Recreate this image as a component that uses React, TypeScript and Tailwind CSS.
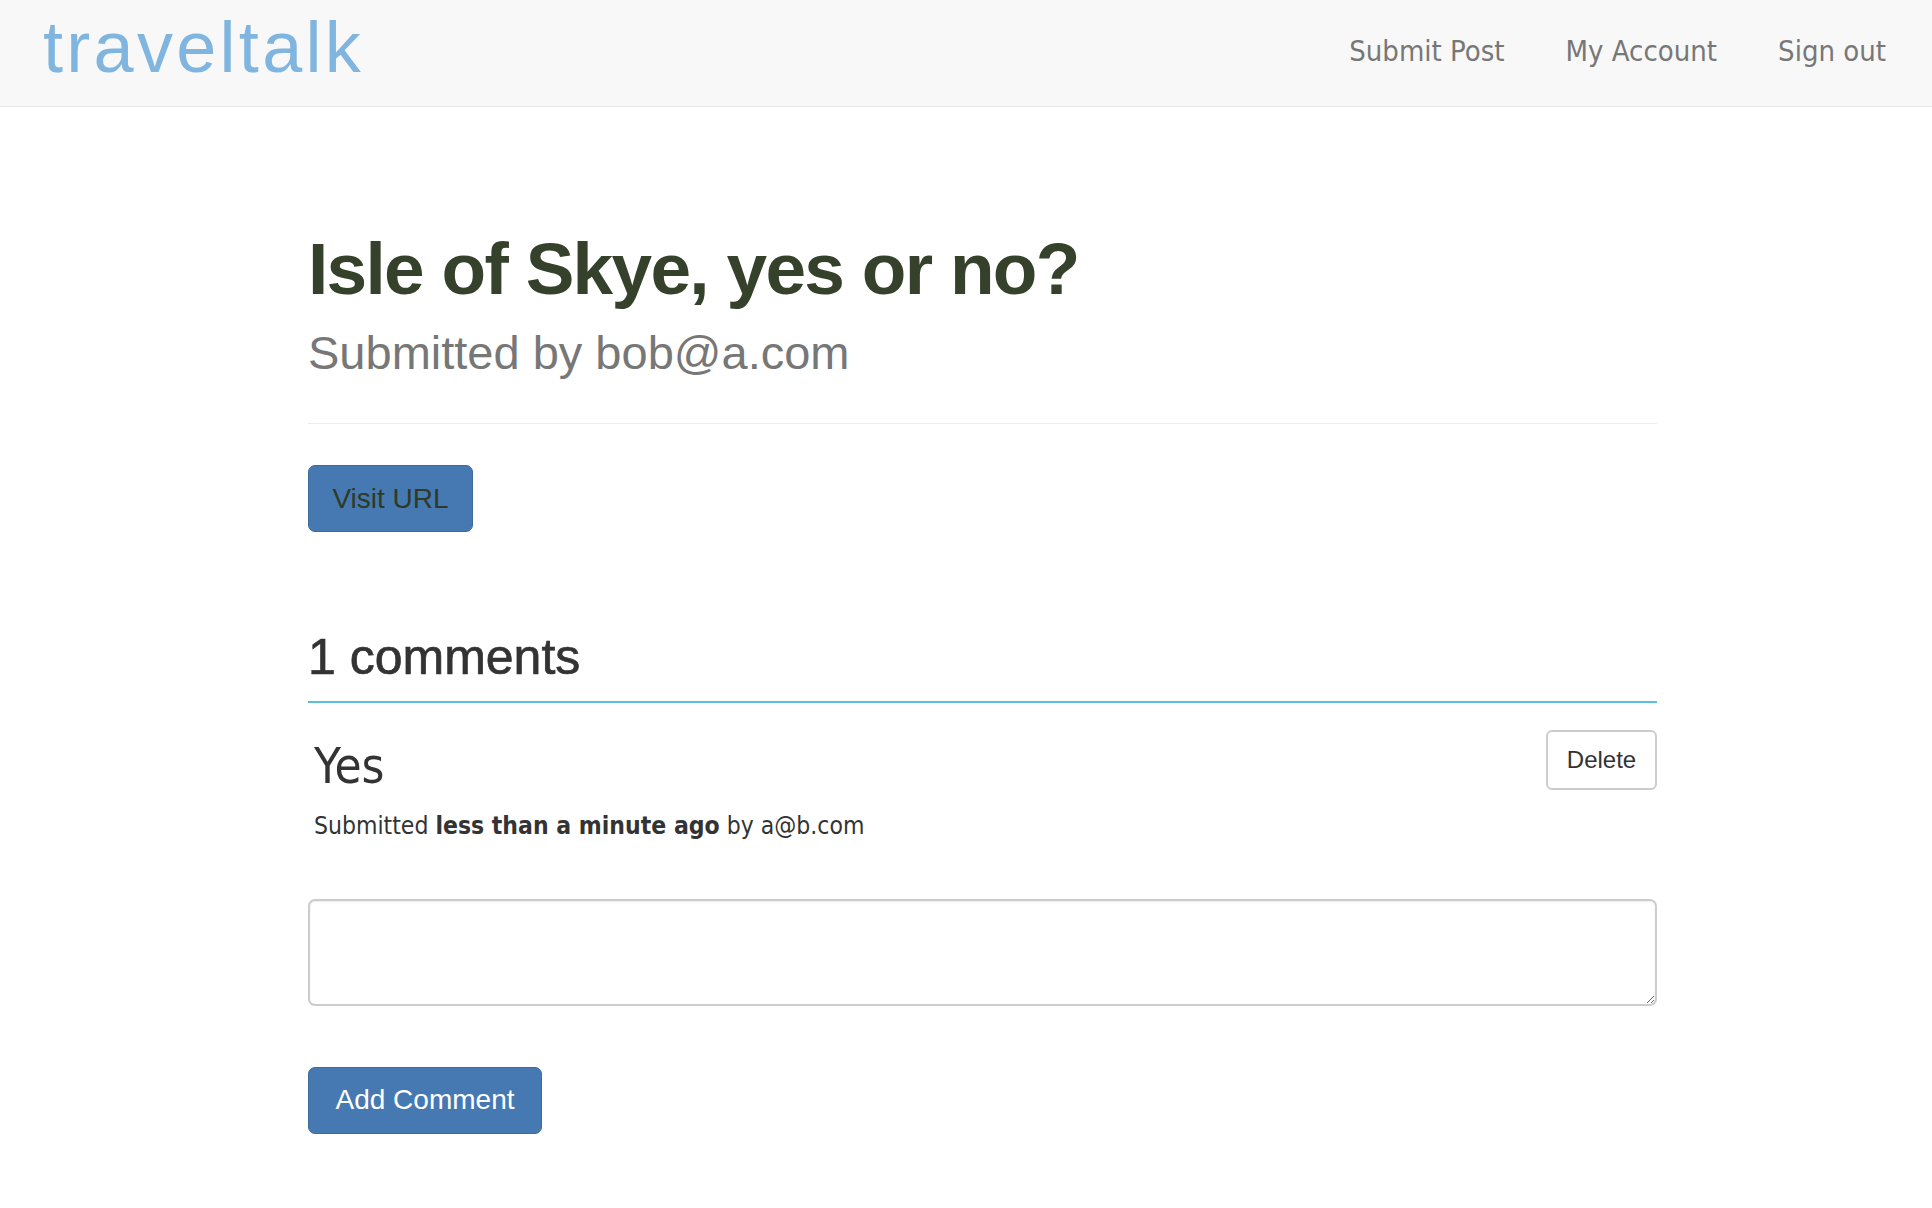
import React from 'react';

const sans = "font-['Liberation_Sans',Arial,sans-serif]";
const tahoma = "font-['DejaVu_Sans_Condensed','DejaVu_Sans',sans-serif]";

function Navbar() {
  return (
    <nav className="h-[107px] bg-[#f8f8f8] border-b border-[#e7e7e7] flex items-center justify-between pl-[43px] pr-[46px]">
      <a className={`${sans} text-[72px] leading-none tracking-[3.3px] text-[#80b5e0] -mt-[12px]`}>traveltalk</a>
      <ul className={`${tahoma} flex gap-[61px] text-[29px] text-[#777] -mt-[2px]`}>
        <li>Submit Post</li>
        <li>My Account</li>
        <li>Sign out</li>
      </ul>
    </nav>
  );
}

export default function App() {
  return (
    <div className="min-h-screen bg-white">
      <Navbar />
      <main className="ml-[308px] w-[1349px]">
        {/* post header */}
        <div className="pt-[122px] pb-[42px] border-b border-[#eee]">
          <h1 className={`${sans} text-[73px] leading-[80px] font-bold tracking-[-1.7px] text-[#35412a]`}>
            Isle of Skye, yes or no?
          </h1>
          <p className={`${sans} mt-[16px] text-[47px] leading-[56px] text-[#777]`}>
            Submitted by bob@a.com
          </p>
        </div>

        <button className={`${sans} mt-[41px] h-[67px] w-[165px] rounded-[7px] bg-[#4679b1] border border-[#3d6a9c] text-[28px] text-[#2e3a26]`}>
          Visit URL
        </button>

        {/* comments */}
        <div className="mt-[98px] pb-[16px] border-b-2 border-[#5bc0de]">
          <h2 className={`${sans} text-[50px] leading-[55px] text-[#333] [-webkit-text-stroke:0.7px_#333]`}>1 comments</h2>
        </div>

        <div className="mt-[27px] flex items-start justify-between">
          <div className="pl-[6px]">
            <h3 className={`${tahoma} text-[49px] leading-[56px] text-[#333] mt-[9px]`}>Yes</h3>
            <p className={`${tahoma} mt-[13px] text-[24.5px] text-[#333]`}>
              Submitted <b>less than a minute ago</b> by a@b.com
            </p>
          </div>
          <button className={`${sans} h-[60px] w-[111px] rounded-[6px] border-2 border-[#ccc] bg-white text-[24px] text-[#333]`}>
            Delete
          </button>
        </div>

        <textarea
          className="block mt-[54px] w-full h-[107px] rounded-[7px] border-2 border-[#ccc] shadow-[inset_0_1px_2px_rgba(0,0,0,0.075)] outline-none resize-y"
        />

        <button className={`${sans} mt-[61px] h-[67px] w-[234px] rounded-[7px] bg-[#4679b1] border border-[#3d6a9c] text-[28px] text-white`}>
          Add Comment
        </button>
      </main>
    </div>
  );
}
